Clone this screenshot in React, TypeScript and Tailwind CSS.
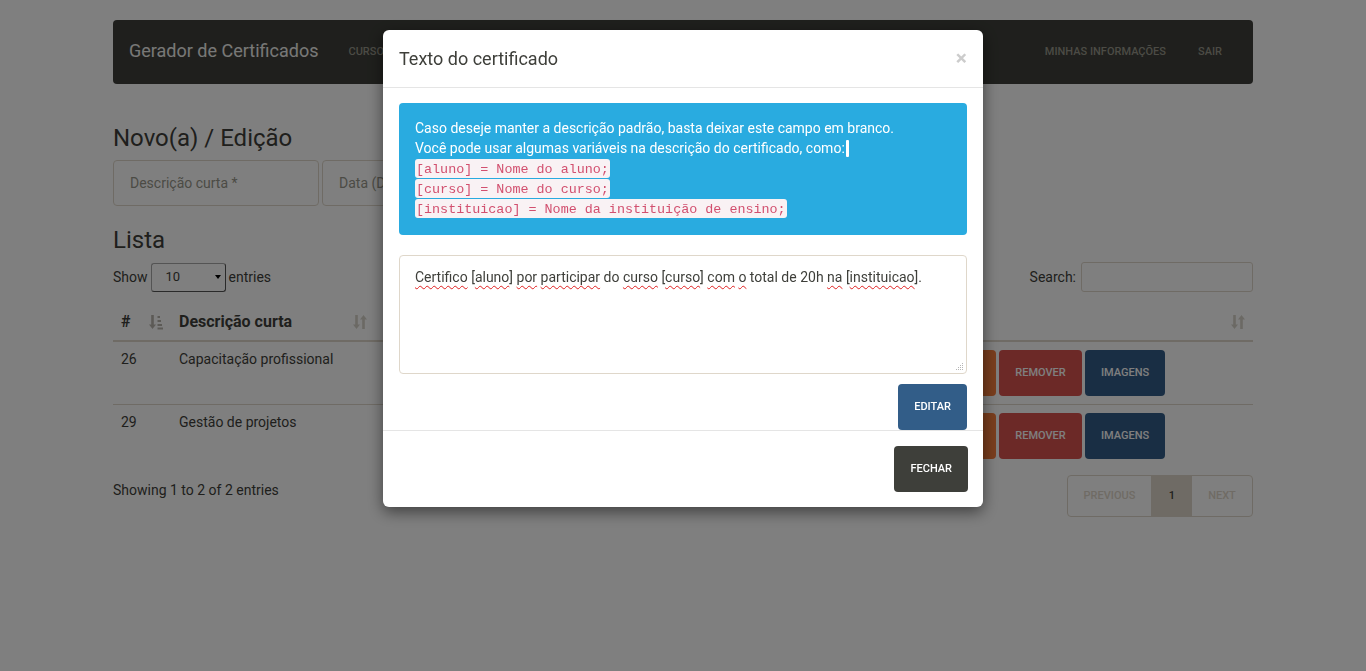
import React from "react";

function SortBoth() {
  return (
    <svg width="14" height="16" viewBox="0 0 14 16" className="text-[#d6d2c9]">
      <path d="M3.5 1v11" stroke="currentColor" strokeWidth="2.6" />
      <path d="M0 10.5h7L3.5 15z" fill="currentColor" />
      <path d="M10.5 15V4" stroke="currentColor" strokeWidth="2.6" />
      <path d="M7 5.5h7L10.5 1z" fill="currentColor" />
    </svg>
  );
}

function SortAsc() {
  return (
    <svg width="14" height="16" viewBox="0 0 14 16" className="text-[#b9b5ad]">
      <path d="M3.5 1v11" stroke="currentColor" strokeWidth="2.6" />
      <path d="M0 10.5h7L3.5 15z" fill="currentColor" />
      <rect x="8.5" y="2" width="2.5" height="2" fill="currentColor" />
      <rect x="8.5" y="6" width="3.5" height="2" fill="currentColor" />
      <rect x="8.5" y="10" width="4.5" height="2" fill="currentColor" />
      <rect x="8.5" y="13.5" width="5.5" height="2" fill="currentColor" />
    </svg>
  );
}

const rows = [
  { id: 26, name: "Capacitação profissional" },
  { id: 29, name: "Gestão de projetos" },
];

const codeLines = [
  "[aluno] = Nome do aluno;",
  "[curso] = Nome do curso;",
  "[instituicao] = Nome da instituição de ensino;",
];

function Squiggle({ children }: { children: React.ReactNode }) {
  return (
    <span className="underline decoration-wavy decoration-[#e02020] decoration-1 underline-offset-[3px]">
      {children}
    </span>
  );
}

export default function App() {
  return (
    <div className="min-h-[671px] bg-white font-['Roboto',sans-serif] text-[14px] text-[#3e3f3a]">
      <div className="mx-auto w-[1140px] pt-5">
        <nav className="flex h-16 items-center justify-between rounded bg-[#3e3f3a]">
          <div className="flex items-center">
            <span className="pb-[3px] pl-4 pr-[30px] text-[18px] text-[#f0f0ee]">Gerador de Certificados</span>
            <span className="text-[11px] font-medium uppercase text-[#98978b]">Cursos</span>
          </div>
          <div className="flex items-center pr-[15px] text-[11px] font-medium uppercase text-[#98978b]">
            <span className="px-[16px]">Minhas informações</span>
            <span className="px-[16px]">Sair</span>
          </div>
        </nav>

        <h3 className="mt-[39px] text-[24px] leading-[30px]">Novo(a) / Edição</h3>
        <div className="mt-[7px] flex gap-[3px]">
          <div className="flex h-[46px] w-[206px] items-center rounded border border-[#dfd7ca] px-4 text-[#98978b]">
            Descrição curta *
          </div>
          <div className="flex h-[46px] w-[206px] items-center rounded border border-[#dfd7ca] px-4 text-[#98978b]">
            Data (DD/MM/AAAA)
          </div>
          <div className="flex h-[46px] w-[206px] items-center rounded border border-[#dfd7ca] px-4 text-[#98978b]">
            Carga horária
          </div>
        </div>

        <h3 className="mt-[19px] text-[24px] leading-[30px]">Lista</h3>
        <div className="mt-[7px] flex items-center justify-between">
          <div className="flex items-center gap-[3px]">
            <span>Show</span>
            <div className="relative flex h-[29px] w-[75px] items-center rounded-[3px] border border-[#a9a9a9] border-r-[#555] border-b-[#555] pl-[14px] text-[13px]">
              10
              <span className="absolute right-[4px] top-[11px] h-0 w-0 border-x-[3px] border-t-[4px] border-x-transparent border-t-black" />
            </div>
            <span>entries</span>
          </div>
          <div className="flex items-center gap-[5px]">
            <span>Search:</span>
            <div className="h-[30px] w-[172px] rounded-[3px] border border-[#dfd7ca]" />
          </div>
        </div>

        <div className="mt-3">
          <div className="grid h-[38px] grid-cols-[58px_204px_1fr_348px] items-center border-b-2 border-[#dfd7ca] text-[16px] font-bold">
            <div className="flex items-center justify-between px-2">
              <span>#</span>
              <SortAsc />
            </div>
            <div className="flex items-center justify-between px-2">
              <span>Descrição curta</span>
              <SortBoth />
            </div>
            <div className="flex items-center justify-between px-2">
              <span>Data</span>
              <SortBoth />
            </div>
            <div className="flex items-center justify-end px-2">
              <SortBoth />
            </div>
          </div>
          {rows.map((r, i) => (
            <div
              key={r.id}
              className={
                i === 0
                  ? "grid h-[63px] grid-cols-[58px_204px_1fr_348px] border-b border-[#dfd7ca]"
                  : "grid h-[63px] grid-cols-[58px_204px_1fr_348px]"
              }
            >
              <div className="px-2 pt-[7px]">{r.id}</div>
              <div className="px-2 pt-[7px]">{r.name}</div>
              <div className="px-2 pt-[7px]">01/01/2017</div>
              <div className="flex gap-[3px] px-2 pt-2 text-[11px] font-medium uppercase text-white">
                <span className="flex h-[46px] w-[83px] items-center justify-center rounded bg-[#f47c3c]">Texto</span>
                <span className="flex h-[46px] w-[83px] items-center justify-center rounded bg-[#d9534f]">Remover</span>
                <span className="flex h-[46px] w-[80px] items-center justify-center rounded bg-[#325d88]">Imagens</span>
              </div>
            </div>
          ))}
        </div>

        <div className="mt-[7px] flex items-start justify-between">
          <span className="mt-[5px]">Showing 1 to 2 of 2 entries</span>
          <div className="flex h-[42px] overflow-hidden rounded border border-[#dfd7ca] text-[11px] font-medium uppercase text-[#dfd7ca]">
            <span className="flex w-[84px] items-center justify-center border-r border-[#dfd7ca]">Previous</span>
            <span className="flex w-[40px] items-center justify-center bg-[#dfd7ca] text-[#3e3f3a]">1</span>
            <span className="flex w-[60px] items-center justify-center">Next</span>
          </div>
        </div>
      </div>

      <div className="fixed inset-0 flex justify-center bg-black/50">
        <div className="mt-[30px] h-fit w-[600px] rounded-[6px] bg-white shadow-[0_5px_15px_rgba(0,0,0,0.5)]">
          <div className="flex h-[58px] items-center justify-between border-b border-[#e5e5e5] px-4">
            <h4 className="text-[18px] text-[#3e3f3a]">Texto do certificado</h4>
            <span className="text-[21px] font-bold leading-none text-[#cccccc]">×</span>
          </div>
          <div className="px-4 pt-[15px]">
            <div className="rounded bg-[#29abe0] px-4 pb-[17px] pt-[15px] text-[14px] leading-[20px] text-white">
              <div>Caso deseje manter a descrição padrão, basta deixar este campo em branco.</div>
              <div className="flex items-center">
                Você pode usar algumas variáveis na descrição do certificado, como:
                <span className="ml-[1px] inline-block h-[17px] w-[3px] rounded-[1px] bg-white" />
              </div>
              {codeLines.map((c) => (
                <div key={c} className="flex h-5 items-end">
                  <code className="h-[19px] rounded-[3px] bg-[#f9f2f4] px-[1px] pt-[2px] font-['Liberation_Mono',monospace] text-[13.4px] leading-[17px] whitespace-pre text-[#d2506f]">
                    {c}
                  </code>
                </div>
              ))}
            </div>
            <div className="relative mt-5 h-[119px] rounded border border-[#dfd7ca] px-[15px] pt-[11px] text-[14px] leading-[20px] text-[#3e3f3a]">
              <Squiggle>Certifico</Squiggle> [<Squiggle>aluno</Squiggle>] <Squiggle>por</Squiggle>{" "}
              <Squiggle>participar</Squiggle> do <Squiggle>curso</Squiggle> [<Squiggle>curso</Squiggle>]{" "}
              <Squiggle>com</Squiggle> <Squiggle>o</Squiggle> total de 20h <Squiggle>na</Squiggle> [
              <Squiggle>instituicao</Squiggle>].
              <svg width="8" height="8" viewBox="0 0 8 8" className="absolute bottom-[2px] right-[2px]">
                <g fill="#b5b5b5">
                  <rect x="6" y="0" width="1" height="1" />
                  <rect x="4" y="2" width="1" height="1" />
                  <rect x="6" y="2" width="1" height="1" />
                  <rect x="2" y="4" width="1" height="1" />
                  <rect x="4" y="4" width="1" height="1" />
                  <rect x="6" y="4" width="1" height="1" />
                  <rect x="0" y="6" width="1" height="1" />
                  <rect x="2" y="6" width="1" height="1" />
                  <rect x="4" y="6" width="1" height="1" />
                  <rect x="6" y="6" width="1" height="1" />
                </g>
              </svg>
            </div>
            <div className="mt-[10px] flex justify-end">
              <span className="flex h-[46px] items-center rounded bg-[#325d88] px-4 text-[11px] font-medium uppercase text-white">
                Editar
              </span>
            </div>
          </div>
          <div className="flex justify-end border-t border-[#e5e5e5] p-[15px]">
            <span className="flex h-[46px] items-center rounded bg-[#3e3f3a] px-4 text-[11px] font-medium uppercase text-white">
              Fechar
            </span>
          </div>
        </div>
      </div>
    </div>
  );
}
